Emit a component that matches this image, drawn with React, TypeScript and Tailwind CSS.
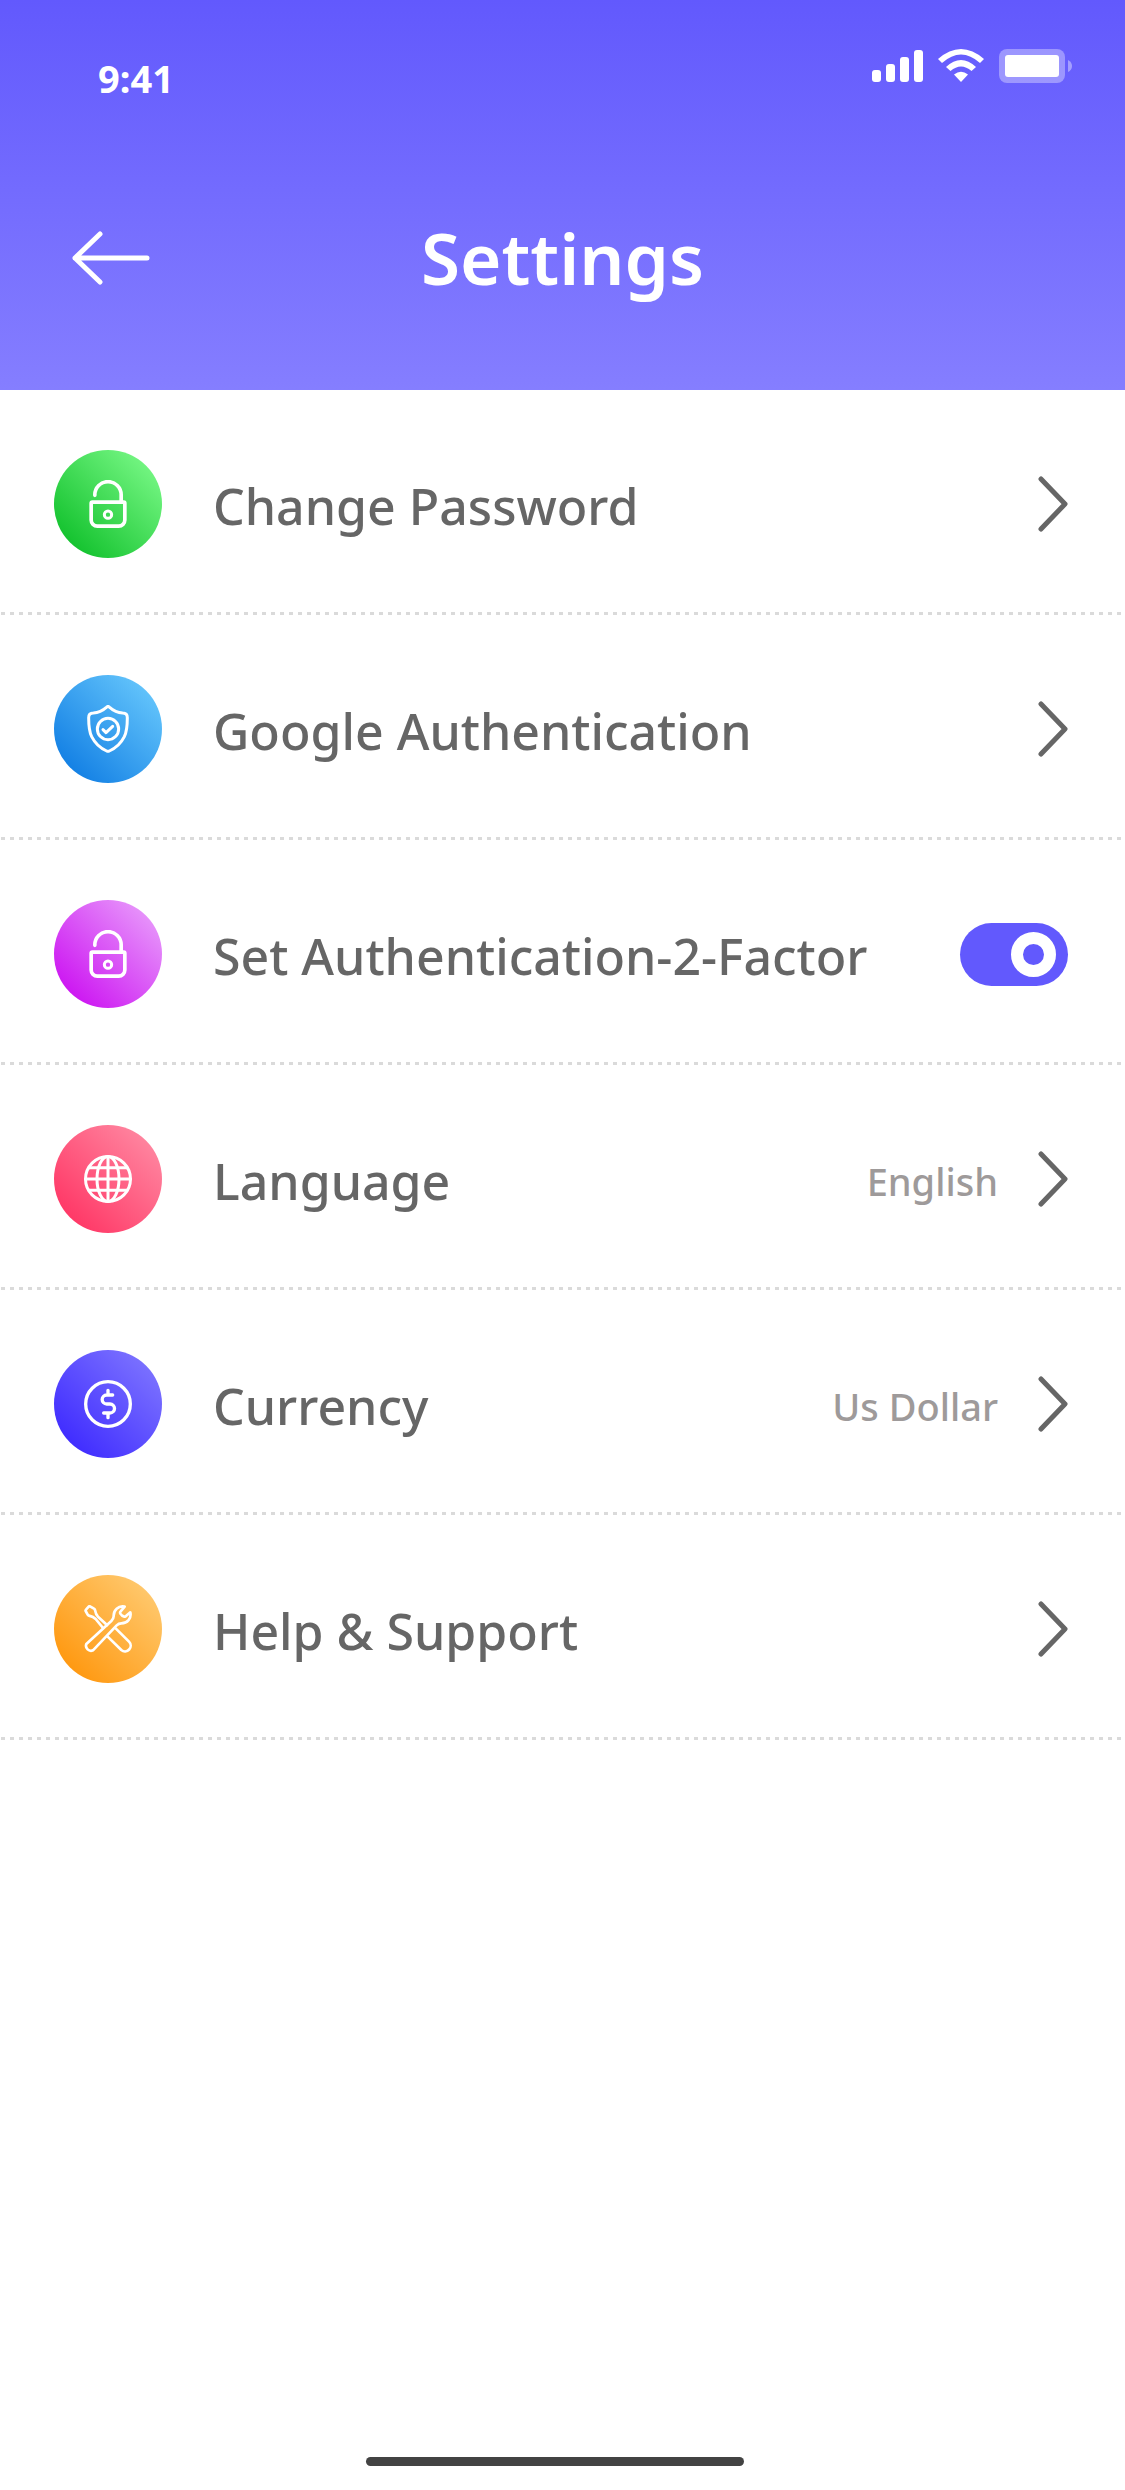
import React from "react";

const stroke = {
  fill: "none",
  stroke: "currentColor",
  strokeLinecap: "round" as const,
  strokeLinejoin: "round" as const,
};

function LockIcon() {
  return (
    <svg viewBox="0 0 144 144" className="size-12 text-white" strokeWidth={11} {...stroke} aria-hidden="true">
      <path d="M32.5 46V44.5a39.5 39.5 0 0 1 79 0V66" />
      <path d="M25 66.500h94a3.500 3.500 0 0 1 3.500 3.500V120a18.500 18.500 0 0 1-18.500 18.500H40A18.500 18.500 0 0 1 21.500 120V70a3.500 3.500 0 0 1 3.500-3.500z" />
      <circle cx="72" cy="104" r="11" strokeWidth={9} />
    </svg>
  );
}

function ShieldIcon() {
  return (
    <svg viewBox="0 0 144 144" className="size-12 text-white" strokeWidth={9} {...stroke} aria-hidden="true">
      <path d="M67 7Q72 2 77 7C88 17 99 23 116 24Q130 24 130 38C130 62 129 78 121 95C111 115 92 131 76 138Q72 140 68 138C52 131 33 115 23 95C15 78 14 62 14 38Q14 24 28 24C45 23 56 17 67 7z" />
      <circle cx="72" cy="72" r="32" />
      <path d="M57 74l9 9L86 64" />
    </svg>
  );
}

function GlobeIcon() {
  return (
    <svg viewBox="0 0 144 144" className="size-12 text-white" strokeWidth={9} {...stroke} aria-hidden="true">
      <circle cx="72" cy="72" r="67.500" />
      <ellipse cx="72" cy="72" rx="33" ry="67.500" />
      <path d="M72 5v134M5 72h134M15 38h114M15 106h114" />
    </svg>
  );
}

function DollarIcon() {
  return (
    <svg viewBox="0 0 144 144" className="size-12 text-white" strokeWidth={10} {...stroke} aria-hidden="true">
      <circle cx="72" cy="72" r="67" />
      <path d="M86 45H68a13.500 13.500 0 0 0 0 27h10a13.500 13.500 0 0 1 0 27H59M72 31v14M72 99v14" />
    </svg>
  );
}

function ToolsIcon() {
  return (
    <svg viewBox="0 0 144 144" className="size-12 text-white" strokeWidth={8} {...stroke} aria-hidden="true">
      <path d="M5 18Q4 16 6 14L14 5Q16 3 18 4L30 11Q32 12 33 15C35 27 37 30 42 35L69 60M5 18L11 29Q12 31 15 32C27 35 30 37 35 42L57 69" />
      <path d="M95 70L135 110A17 17 0 0 1 112 135L71 95" />
      <path d="M7 117L82 48Q89 41 89 34C88 16 103 1 122 5L110 19Q107 22 109 26Q113 33 121 35Q124 36 126 33L139 22C143 40 130 55 112 55Q104 55 98 61L27 136A15 15 0 0 1 7 117z" />
    </svg>
  );
}

function Chevron() {
  return (
    <svg viewBox="0 0 30 56" className="h-14 w-[30px] shrink-0 text-[#666]" strokeWidth={5} {...stroke} aria-hidden="true">
      <path d="M3 3l24 25L3 53" />
    </svg>
  );
}

function StatusIcons() {
  return (
    <svg viewBox="0 0 200 34" className="h-[34px] w-[200px] text-white" fill="currentColor" role="img" aria-label="Signal, Wi-Fi and battery">
      <rect x="0" y="21" width="9" height="12" rx="3" />
      <rect x="14" y="15" width="9" height="18" rx="3" />
      <rect x="28" y="8" width="9" height="25" rx="3" />
      <rect x="42" y="1" width="9" height="32" rx="3" />
      <path d="M66 10Q89-10 112 10L108 14Q89-3 70 14z" />
      <path d="M74 18Q89 4 104 18L99.500 22Q89 13 78.500 22z" />
      <path d="M82 25.500Q89 20 96 25.500L89 33z" />
      <rect x="127" y="0" width="66" height="34" rx="8" opacity=".35" />
      <rect x="133" y="6" width="54" height="22" rx="3" />
      <path d="M196 11Q200 13 200 17T196 23z" opacity=".4" />
    </svg>
  );
}

type Row = {
  label: string;
  icon: () => React.JSX.Element;
  tint: string;
  value?: string;
  toggle?: boolean;
};

const rows: Row[] = [
  { label: "Change Password", icon: LockIcon, tint: "from-[#02b91f] to-[#84fe90]" },
  { label: "Google Authentication", icon: ShieldIcon, tint: "from-[#0574e0] to-[#70cfff]" },
  { label: "Set Authentication-2-Factor", icon: LockIcon, tint: "from-[#c800f0] to-[#eba9fc]", toggle: true },
  { label: "Language", icon: GlobeIcon, tint: "from-[#ff2a5c] to-[#ff92a9]", value: "English" },
  { label: "Currency", icon: DollarIcon, tint: "from-[#3520ff] to-[#857dff]", value: "Us Dollar" },
  { label: "Help & Support", icon: ToolsIcon, tint: "from-[#ff9000] to-[#ffd07c]" },
];

const rowClass = "flex w-full items-center pl-[54px] pr-[57px] pt-[60px] pb-[54px] text-left";

function RowBody({ row }: { row: Row }) {
  const Icon = row.icon;
  return (
    <>
      <span className={`grid size-[108px] shrink-0 place-items-center rounded-full bg-linear-to-tr/srgb ${row.tint}`}>
        <Icon />
      </span>
      <span className="ml-[51px] flex-1 pt-1 text-[50px] leading-[70px] font-medium text-[#666]">{row.label}</span>
    </>
  );
}

export default function App() {
  return (
    <div className="flex min-h-screen flex-col bg-white font-['Noto_Sans',sans-serif]">
      <header className="bg-linear-to-b/srgb from-[#6259fd] to-[#857eff] text-white">
        <div className="flex items-start justify-between pt-[49px] pr-[53px] pl-[98px]">
          <time className="text-[38px] leading-[58px] font-bold">9:41</time>
          <StatusIcons />
        </div>
        <div className="grid grid-cols-[1fr_auto_1fr] items-center px-[72px] pt-[101px] pb-[82px]">
          <button type="button" aria-label="Back" className="justify-self-start">
            <svg viewBox="0 0 78 54" className="h-[54px] w-[78px]" strokeWidth={5} {...stroke} aria-hidden="true">
              <path d="M28 3L3 27l25 24M3 27h72" />
            </svg>
          </button>
          <h1 className="text-[71px] leading-[100px] font-semibold">Settings</h1>
        </div>
      </header>

      <main className="flex-1">
        <ul>
          {rows.map((row) => (
            <li key={row.label}>
              {row.toggle ? (
                <label className={rowClass}>
                  <RowBody row={row} />
                  <input
                    type="checkbox"
                    role="switch"
                    defaultChecked
                    className="flex h-[63px] w-[108px] shrink-0 appearance-none items-center rounded-full bg-gray-300 px-3 before:size-[45px] before:rounded-full before:border-12 before:border-white checked:justify-end checked:bg-[#6259fd]"
                  />
                </label>
              ) : (
                <button type="button" className={rowClass}>
                  <RowBody row={row} />
                  {row.value && (
                    <span className="mr-10 pt-1 text-[38px] leading-[54px] font-medium text-[#9e9a9a]">{row.value}</span>
                  )}
                  <Chevron />
                </button>
              )}
              <div className="h-[3px] bg-[repeating-linear-gradient(90deg,transparent_0_1px,#dadada_1px_5px,transparent_5px_9px)]" />
            </li>
          ))}
        </ul>
      </main>

      <footer className="flex justify-center pr-4 pb-6">
        <div className="h-[9px] w-[378px] rounded-full bg-[#434343]" />
      </footer>
    </div>
  );
}
